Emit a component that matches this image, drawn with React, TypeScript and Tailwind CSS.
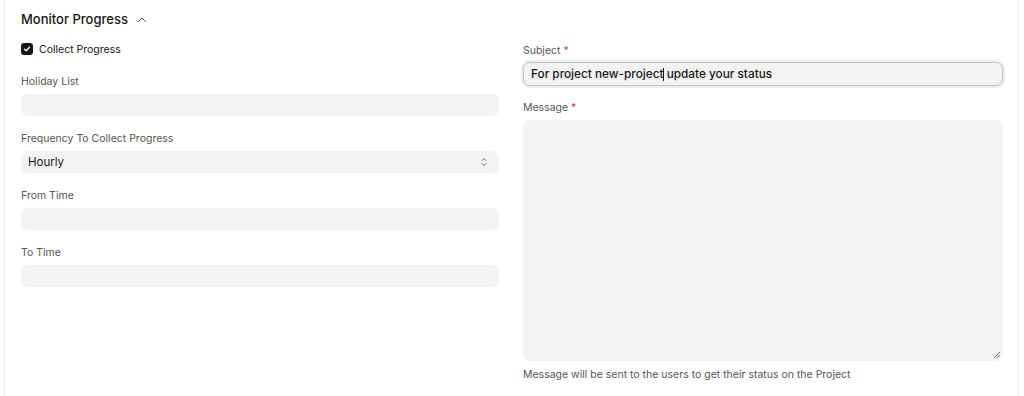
import React from "react";

const font = { fontFamily: "Inter, 'Noto Sans', sans-serif" };

function Label({ children, req }: { children: React.ReactNode; req?: boolean }) {
  return (
    <div className="h-[14px] leading-[14px] pt-[2px] text-[10.5px] text-[#565656] box-content -mb-[2px]">
      {children}
      {req && <span className="text-[#e03636]"> *</span>}
    </div>
  );
}

function Field({ label, children }: { label: string; children?: React.ReactNode }) {
  return (
    <div className="flex flex-col gap-[7px]">
      <Label>{label}</Label>
      {children ?? <div className="h-[22px] rounded-[7px] bg-[#f3f3f3]" />}
    </div>
  );
}

export default function App() {
  return (
    <div className="w-[1024px] h-[396px] bg-white overflow-hidden" style={font}>
      <div className="ml-[4px] w-[1015px] h-[396px] border-l border-r border-[#ededed] pl-[16px] pr-[15px]">
        <div className="h-[38px] flex items-center gap-[9px]">
          <span className="text-[13px] font-medium text-[#171717] leading-none">Monitor Progress</span>
          <svg width="12" height="12" viewBox="0 0 12 12" fill="none" className="mt-[1px] -ml-[1px]">
            <path d="M2.5 7.5L6 4l3.5 3.5" stroke="#404040" strokeWidth="1" strokeLinecap="round" strokeLinejoin="round" />
          </svg>
        </div>
        <div className="flex gap-[24px]">
          <div className="w-[478px] flex flex-col">
            <div className="mt-[4px] h-[14px] flex items-center gap-[6px]">
              <span className="w-[12px] h-[12px] rounded-[3px] bg-[#171717] flex items-center justify-center">
                <svg width="8" height="8" viewBox="0 0 8 8" fill="none">
                  <path d="M1.5 4.2L3.2 5.8L6.5 2.3" stroke="white" strokeWidth="1.3" strokeLinecap="round" strokeLinejoin="round" />
                </svg>
              </span>
              <span className="text-[10.5px] text-[#171717] leading-[14px] pt-[2px]">Collect Progress</span>
            </div>
            <div className="mt-[17px] flex flex-col gap-[14px]">
              <Field label="Holiday List" />
              <Field label="Frequency To Collect Progress">
                <div className="h-[22px] rounded-[7px] bg-[#f3f3f3] flex items-center justify-between pl-[7px] pr-[11px]">
                  <span className="text-[11.5px] text-[#171717] pt-[2px]">Hourly</span>
                  <svg width="8" height="12" viewBox="0 0 8 12" fill="none">
                    <path d="M2 4.5L4 2.5l2 2M2 7.5l2 2 2-2" stroke="#6b6b6b" strokeWidth="1" strokeLinecap="round" strokeLinejoin="round" />
                  </svg>
                </div>
              </Field>
              <Field label="From Time" />
              <Field label="To Time" />
            </div>
          </div>
          <div className="w-[480px] flex flex-col">
            <div className="mt-[4px]">
              <Label req>Subject</Label>
            </div>
            <div className="mt-[6px] h-[24px] rounded-[7px] bg-[#f3f3f3] border border-[#c4c4c4] shadow-[0_0_0_2px_#ececec] flex items-center px-[7px]">
              <span className="text-[11.8px] font-medium text-[#171717] whitespace-pre pt-[2px]">
                For project new-project<span className="inline-block w-px h-[13px] bg-[#171717] align-middle -mx-[0.5px]" /> update your status
              </span>
            </div>
            <div className="mt-[13px]">
              <Label req>Message</Label>
            </div>
            <div className="mt-[7px] h-[241px] rounded-[7px] bg-[#f3f3f3] relative">
              <svg width="8" height="8" viewBox="0 0 8 8" className="absolute right-[2px] bottom-[2px]">
                <path d="M7 1L1 7M7 4L4 7" stroke="#6b6b6b" strokeWidth="1" />
              </svg>
            </div>
            <div className="mt-[7px] text-[10.5px] leading-[14px] text-[#565656]">
              Message will be sent to the users to get their status on the Project
            </div>
          </div>
        </div>
      </div>
    </div>
  );
}
